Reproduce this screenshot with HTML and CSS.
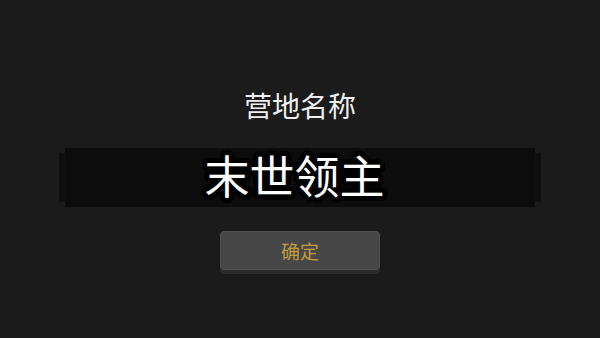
FILE: index.html
```html
<!DOCTYPE html>
<html lang="zh">
<head>
<meta charset="utf-8">
<link rel="stylesheet" href="styles.css">
</head>
<body>
<div class="screen">
  <div class="title">营地名称</div>
  <div class="namebar"><span class="name">末世领主</span></div>
  <button class="ok">确定</button>
</div>
</body>
</html>
```
FILE: styles.css
```css
html, body {
  margin: 0;
  padding: 0;
  background: #1b1b1b;
}
.screen {
  width: 600px;
  height: 338px;
  display: flex;
  flex-direction: column;
  align-items: center;
  font-family: "Noto Sans CJK SC", "Noto Sans", sans-serif;
}
.title {
  margin-top: 91px;
  font-size: 28px;
  line-height: 28px;
  height: 28px;
  color: #efefef;
}
.namebar {
  margin-top: 29px;
  width: 470px;
  height: 59px;
  background: #0c0c0c;
  box-shadow: -11px 0 0 -5px #0f0f0f, 11px 0 0 -5px #0f0f0f;
  display: flex;
  align-items: center;
  justify-content: center;
}
.name {
  font-size: 45px;
  line-height: 45px;
  color: #ffffff;
  margin-bottom: 7px;
  margin-right: 11px;
  text-shadow:
    5px 0 0 #000, -5px 0 0 #000, 0 5px 0 #000, 0 -5px 0 #000,
    4px 3px 0 #000, -4px 3px 0 #000, 4px -3px 0 #000, -4px -3px 0 #000,
    3px 4px 0 #000, -3px 4px 0 #000, 3px -4px 0 #000, -3px -4px 0 #000,
    5px 2px 0 #000, -5px 2px 0 #000, 5px -2px 0 #000, -5px -2px 0 #000,
    2px 5px 0 #000, -2px 5px 0 #000, 2px -5px 0 #000, -2px -5px 0 #000,
    0 0 4px #000;
}
.ok {
  margin-top: 24px;
  width: 160px;
  height: 39px;
  padding: 0;
  background: #474747;
  border: 1px solid #505050;
  border-radius: 4px;
  box-shadow: 0 4px 0 #2c2c2c;
  color: #c49a3c;
  font-family: "Noto Sans CJK SC", "Noto Sans", sans-serif;
  font-size: 19px;
  line-height: 37px;
}
```
